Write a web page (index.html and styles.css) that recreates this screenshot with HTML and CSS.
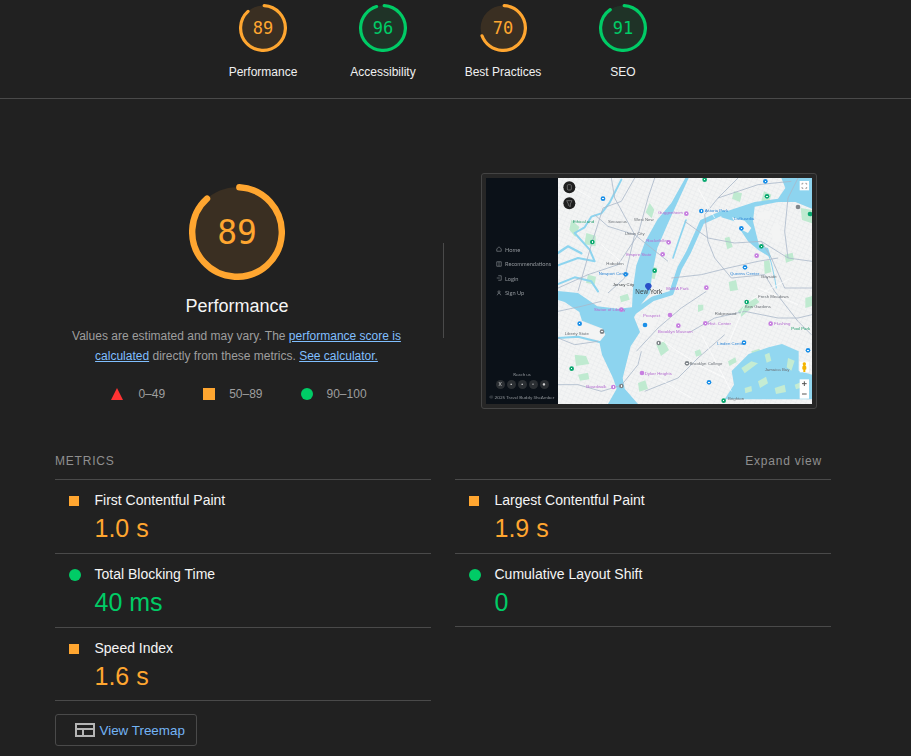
FILE: index.html
```html
<!DOCTYPE html>
<html lang="en">
<head>
    <meta charset="UTF-8">
    <title>Lighthouse Report</title>
    <link rel="stylesheet" href="styles.css">
</head>
<body>
    <header class="topbar">
        <div class="topbar-scores">
            <div class="score-item">
                <svg class="gauge-small" viewBox="0 0 48 48"><circle class="gauge-bg avg" cx="24" cy="24" r="22.4"/><circle class="gauge-arc avg" cx="24" cy="24" r="22.4" pathLength="100" stroke-dasharray="87.5 100" transform="rotate(-87 24 24)"/><text class="gauge-num avg-text" x="24" y="30">89</text></svg>
                <div class="score-label">Performance</div>
            </div>
            <div class="score-item">
                <svg class="gauge-small" viewBox="0 0 48 48"><circle class="gauge-bg good" cx="24" cy="24" r="22.4"/><circle class="gauge-arc good" cx="24" cy="24" r="22.4" pathLength="100" stroke-dasharray="94.5 100" transform="rotate(-87 24 24)"/><text class="gauge-num good-text" x="24" y="30">96</text></svg>
                <div class="score-label">Accessibility</div>
            </div>
            <div class="score-item">
                <svg class="gauge-small" viewBox="0 0 48 48"><circle class="gauge-bg avg" cx="24" cy="24" r="22.4"/><circle class="gauge-arc avg" cx="24" cy="24" r="22.4" pathLength="100" stroke-dasharray="68.5 100" transform="rotate(-87 24 24)"/><text class="gauge-num avg-text" x="24" y="30">70</text></svg>
                <div class="score-label">Best Practices</div>
            </div>
            <div class="score-item">
                <svg class="gauge-small" viewBox="0 0 48 48"><circle class="gauge-bg good" cx="24" cy="24" r="22.4"/><circle class="gauge-arc good" cx="24" cy="24" r="22.4" pathLength="100" stroke-dasharray="89.5 100" transform="rotate(-87 24 24)"/><text class="gauge-num good-text" x="24" y="30">91</text></svg>
                <div class="score-label">SEO</div>
            </div>
        </div>
    </header>

    <main class="report">
        <section class="hero">
            <div class="hero-score">
                <svg class="gauge-big" viewBox="0 0 96 96"><circle class="gauge-bg avg" cx="48" cy="48" r="44.8"/><circle class="gauge-arc-big avg" cx="48" cy="48" r="44.8" pathLength="100" stroke-dasharray="87.5 100" transform="rotate(-87 48 48)"/><text class="gauge-num-big avg-text" x="48" y="60">89</text></svg>
                <h2>Performance</h2>
                <p class="hero-note">Values are estimated and may vary. The <a href="#">performance score is</a> <a href="#">calculated</a> directly from these metrics. <a href="#">See calculator.</a></p>
                <div class="legend">
                    <div class="legend-item"><span class="icon-triangle"></span>0–49</div>
                    <div class="legend-item"><span class="icon-square"></span>50–89</div>
                    <div class="legend-item"><span class="icon-circle"></span>90–100</div>
                </div>
            </div>
            <div class="hero-divider"></div>
            <div class="shot">
                <aside class="shot-side">
                    <nav class="shot-nav">
                        <div class="shot-link"><svg viewBox="0 0 8 8"><path d="M1 4 4 1l3 3v3H1z"/></svg>Home</div>
                        <div class="shot-link"><svg viewBox="0 0 8 8"><path d="M1 1h6v6H1zM4 1v6"/></svg>Recommendations</div>
                        <div class="shot-link"><svg viewBox="0 0 8 8"><path d="M3 1h4v6H3M1 4h4"/></svg>Login</div>
                        <div class="shot-link"><svg viewBox="0 0 8 8"><circle cx="4" cy="2.5" r="1.4"/><path d="M1.5 7 3 4.5h2L6.500 7"/></svg>Sign Up</div>
                    </nav>
                    <div class="shot-foot">
                        <div class="shot-reach">Reach us</div>
                        <div class="shot-socials">
                            <span>X</span><span>▪</span><span>▪</span><span>▫</span><span>●</span>
                        </div>
                        <div class="shot-copy">© 2025 Travel Buddy SheAmber</div>
                    </div>
                </aside>
                <svg class="shot-map" viewBox="0 0 762 678">
                    <defs>
                        <pattern id="streets" width="14" height="12" patternUnits="userSpaceOnUse" patternTransform="rotate(24)">
                            <path d="M0 0H14M0 0V12" stroke="#d9dde1" stroke-width="1.4" fill="none"/>
                        </pattern>
                        <radialGradient id="pin-purple"><stop offset="22%" stop-color="#fff"/><stop offset="30%" stop-color="#c77fe0"/></radialGradient>
                        <radialGradient id="pin-blue"><stop offset="22%" stop-color="#fff"/><stop offset="30%" stop-color="#1a8fe8"/></radialGradient>
                        <radialGradient id="pin-green"><stop offset="22%" stop-color="#fff"/><stop offset="30%" stop-color="#0aa870"/></radialGradient>
                        <radialGradient id="pin-grey"><stop offset="22%" stop-color="#fff"/><stop offset="30%" stop-color="#80868b"/></radialGradient>
                    </defs>
                    <rect width="762" height="678" fill="#f3f4f4"/>
                    <rect width="762" height="678" fill="url(#streets)"/>

                    <!-- parks -->
                    <path fill="#bfead0" d="M275 75l14 20-8 26-18-18zM40 125l24 22-12 30-18-22zM85 165l28 8 0 32-34-6zM272 262l26 8-8 34-24-8zM90 290l24 6-4 24-26-6zM528 40l24 6-6 26-24-10zM618 40l22 10-8 26-22-8zM500 180l14-4 10 30-16 8zM618 250l16-4 6 36-20 6zM512 312l22-6 6 30-24 4zM680 230l24-6 4 22-24 8zM540 400l30-30 24-10 10 12-30 24-24 20zM420 380l16 0 0 16-16 6zM410 520l16-6 6 16-18 6zM580 520l24-8 6 14-24 14zM510 550l22-12 4 14-22 12zM185 355l24-8 6 18-26 8zM295 500l24-10 14 26-24 18zM50 530l34 4 10 24-40 6zM240 615l22-8 8 26-26 8zM60 590l30-6 4 20-28 4zM728 90l34 6 0 40-30-10zM742 360l20-6 0 30-20 6z"/>

                    <!-- water -->
                    <g fill="#8dd4ef">
                        <path d="M382 0 392 0 352 88 328 140 298 210 282 290 276 345 250 378 228 418 246 462 218 505 206 552 194 600 200 632 240 678 150 678 176 632 165 600 132 530 124 492 142 470 134 452 72 428 64 402 20 372 0 366 0 339 60 345 118 385 180 392 222 388 225 330 235 262 262 190 298 125 340 75z"/>
                        <path d="M490 105 590 72 660 62 682 30 670 0 762 0 762 92 712 72 660 72 590 86 585 130 604 205 630 210 640 240 600 215 570 190 530 130 490 118z"/>
                        <path d="M521 579 552 548 572 528 632 508 672 498 722 520 722 578 762 590 762 664 500 664 528 620z" fill="#92d7f0"/>
                    </g>
                    <g fill="none" stroke="#8dd4ef" stroke-linejoin="round" stroke-linecap="round">
                        <path d="M232 400 285 362 340 345 365 270 392 222 432 132 495 104" stroke-width="14"/>
                        <path d="M345 240 365 180 384 126" stroke-width="5"/>
                        <path d="M0 262 60 240 110 250 95 215 50 165 80 148 100 116 130 106 155 74 190 5" stroke-width="6"/>
                        <path d="M0 225 30 205 70 226" stroke-width="7"/>
                        <path d="M0 318 50 298 100 310 120 340" stroke-width="6"/>
                        <path d="M625 210 640 255 650 300 655 330" stroke-width="3"/>
                        <path d="M0 480 60 476 124 492" stroke-width="6"/>
                    </g>
                    <g fill="#f3f4f4">
                        <path d="M522 118 560 128 580 150 570 165 540 150zM640 150 660 130 672 190 645 195zM595 104 640 98 634 125 604 122z"/>
                        <path d="M258 418 278 402 296 432 270 472 252 458z"/>
                        <path d="M68 432 132 452 140 470 122 486 60 470z"/>
                    </g>
                    <path d="M550 570l30-20 20 6-40 30zM600 610l24-14 6 20-24 14zM650 630l30-10 4 22-30 6zM690 540l20 8-10 30-14-10zM620 530l14-6 6 24-14 6zM560 630l20-6 2 16-20 6zM710 620l20-8 4 16-20 6z" fill="#c5ecd2"/>

                    <!-- roads -->
                    <g fill="none" stroke="#a9b8c9" stroke-width="2.4">
                        <path d="M0 330 90 290 180 260 240 170 270 60 290 0"/>
                        <path d="M110 110 150 145 230 170 330 250"/>
                        <path d="M230 0 190 70 135 90 100 200 60 340"/>
                        <path d="M380 130 450 180 530 195 610 190 690 240 762 250"/>
                        <path d="M340 300 430 290 510 270 600 250 660 240"/>
                        <path d="M450 190 470 240 520 300 620 290 650 340 720 430 760 470"/>
                        <path d="M400 460 470 420 560 400 660 420 720 420 762 410"/>
                        <path d="M235 520 300 450 370 390 445 340"/>
                        <path d="M0 620 60 620 130 640 190 622 240 560 250 520"/>
                        <path d="M540 0 480 60 440 110 450 190"/>
                        <path d="M690 240 680 160 690 60 720 0"/>
                        <path d="M0 480 50 500 120 490"/>
                        <path d="M160 0 170 60 230 170 200 300 150 345"/>
                        <path d="M480 60 600 20 700 10"/>
                        <path d="M610 190 640 240 680 330 762 330"/>
                        <path d="M260 640 360 600 420 540 500 470"/>
                        <path d="M0 400 70 385 130 370"/>
                    </g>
                    <g fill="none" stroke="#fff" stroke-width="2">
                        <path d="M300 480 420 560 500 600M430 470 520 640M560 380 510 500M700 300 620 340 560 380M30 20 100 60M130 200 200 260M420 30 470 120M600 330 720 380M300 600 400 660"/>
                    </g>

                    <!-- pins -->
                    <g fill="url(#pin-purple)">
                        <circle cx="385" cy="107" r="7"/><circle cx="332" cy="193" r="7"/><circle cx="314" cy="229" r="7"/><circle cx="445" cy="329" r="7"/><circle cx="190" cy="395" r="7"/><circle cx="336" cy="411" r="7"/><circle cx="361" cy="443" r="7"/><circle cx="442" cy="436" r="7"/><circle cx="638" cy="437" r="7"/><circle cx="596" cy="233" r="7"/><circle cx="252" cy="585" r="7"/><circle cx="166" cy="627" r="7"/>
                    </g>
                    <g fill="url(#pin-blue)">
                        <circle cx="135" cy="62" r="7"/><circle cx="430" cy="99" r="7"/><circle cx="550" cy="151" r="7"/><circle cx="561" cy="268" r="7"/><circle cx="622" cy="10" r="7"/><circle cx="203" cy="289" r="7"/><circle cx="65" cy="437" r="7"/><circle cx="261" cy="441" r="7"/><circle cx="558" cy="494" r="7"/><circle cx="453" cy="613" r="7"/><circle cx="750" cy="517" r="7"/>
                    </g>
                    <g fill="url(#pin-green)">
                        <circle cx="440" cy="5" r="7"/><circle cx="627" cy="55" r="7"/><circle cx="103" cy="192" r="7"/><circle cx="290" cy="278" r="7"/><circle cx="610" cy="205" r="7"/><circle cx="566" cy="372" r="7"/><circle cx="41" cy="572" r="7"/><circle cx="497" cy="668" r="7"/><circle cx="756" cy="108" r="7"/>
                    </g>
                    <g fill="url(#pin-grey)">
                        <circle cx="132" cy="461" r="7"/><circle cx="302" cy="495" r="7"/><circle cx="190" cy="624" r="7"/><circle cx="387" cy="556" r="7"/><circle cx="720" cy="87" r="7"/>
                    </g>
                    <path d="M271 315c-7 0-10 5-10 9 0 6 10 14 10 14s10-8 10-14c0-4-3-9-10-9z" fill="#2a50c8"/>

                    <!-- labels -->
                    <g class="map-label">
                        <text x="44" y="135" class="map-label-green">Ethical and</text><text x="150" y="134">Secaucus</text><text x="200" y="170">Union City</text><text x="228" y="128">West New</text><text x="145" y="262">Hoboken</text>
                        <text x="164" y="325" class="map-label-dark">Jersey City</text>
                        <text x="300" y="108" class="map-label-purple">Guggenheim</text><text x="265" y="192" class="map-label-purple">Rockefeller</text><text x="205" y="233" class="map-label-purple">Empire State</text>
                        <text x="122" y="292" class="map-label-blue">Newport Centre</text><text x="440" y="103" class="map-label-blue">Astoria Park</text><text x="528" y="126" class="map-label-blue">LaGuardia</text><text x="516" y="290" class="map-label-blue">Queens Center</text><text x="108" y="399" class="map-label-purple">Statue of Liberty</text>
                        <text x="325" y="335" class="map-label-purple">MoMA Park</text><text x="255" y="416" class="map-label-purple">Prospect</text><text x="648" y="442" class="map-label-purple">Flushing</text><text x="450" y="440" class="map-label-purple">Hist. Center</text><text x="300" y="466" class="map-label-purple">Brooklyn Museum</text>
                        <text x="478" y="500" class="map-label-blue">Linden Center</text><text x="260" y="590" class="map-label-purple">Dyker Heights</text><text x="85" y="631" class="map-label-purple">Boardwalk</text><text x="395" y="560">Brooklyn College</text><text x="620" y="580">Jamaica Bay</text><text x="700" y="455" class="map-label-green">Pool Park</text><text x="20" y="470">Liberty State</text><text x="470" y="410">Ridgewood</text><text x="560" y="390">Kew Gardens</text><text x="610" y="300">Bayside</text><text x="600" y="360">Fresh Meadows</text><text x="510" y="665">Brighton</text>
                    </g>
                    <text x="232" y="348" class="map-label-city">New York</text>

                    <!-- map controls -->
                    <circle cx="34" cy="28" r="18" fill="#1f1f1f"/>
                    <rect x="28" y="20" width="12" height="16" rx="3" fill="none" stroke="#888" stroke-width="2"/>
                    <circle cx="34" cy="76" r="18" fill="#1f1f1f"/>
                    <path d="M26 68H42L37 78V86L31 82V78z" fill="none" stroke="#888" stroke-width="2"/>
                    <rect x="725" y="9" width="28" height="28" fill="#fff"/>
                    <path d="M732 20V16H736M742 16H746V20M746 27V31H742M736 31H732V27" fill="none" stroke="#777" stroke-width="2"/>
                    <rect x="725" y="604" width="28" height="58" fill="#fff"/>
                    <path d="M732 617H746M739 610V624M732 648H746" stroke="#555" stroke-width="3"/>
                    <rect x="725" y="551" width="28" height="32" fill="#fff"/>
                    <path d="M739 553c-4 0-5 3-5 5s1 3 2 4l-3 4v8l3 1v7h6v-7l3-1v-8l-3-4c1-1 2-2 2-4s-1-5-5-5z" fill="#f4b400"/>
                </svg>
            </div>
        </section>

        <section class="metrics">
            <div class="metrics-head">
                <span class="metrics-title">Metrics</span>
                <span class="metrics-toggle">Expand view</span>
            </div>
            <div class="metrics-grid">
                <div class="metric">
                    <span class="icon-square"></span>
                    <div><div class="metric-name">First Contentful Paint</div><div class="metric-value avg-text">1.0 s</div></div>
                </div>
                <div class="metric">
                    <span class="icon-square"></span>
                    <div><div class="metric-name">Largest Contentful Paint</div><div class="metric-value avg-text">1.9 s</div></div>
                </div>
                <div class="metric">
                    <span class="icon-circle"></span>
                    <div><div class="metric-name">Total Blocking Time</div><div class="metric-value good-text">40 ms</div></div>
                </div>
                <div class="metric metric-end">
                    <span class="icon-circle"></span>
                    <div><div class="metric-name">Cumulative Layout Shift</div><div class="metric-value good-text">0</div></div>
                </div>
                <div class="metric metric-end">
                    <span class="icon-square"></span>
                    <div><div class="metric-name">Speed Index</div><div class="metric-value avg-text">1.6 s</div></div>
                </div>
            </div>
            <button class="treemap-btn">
                <svg viewBox="0 0 20 14"><path d="M1 1H19V13H1zM1 6H19M8 6V13" fill="none" stroke="#b5b5b5" stroke-width="2"/></svg>
                View Treemap
            </button>
        </section>
    </main>
</body>
</html>
```

FILE: styles.css
```css
body, h2, p {
    margin: 0;
    padding: 0;
}

body {
    background-color: #212121;
    color: #fff;
    font-family: "Liberation Sans", Arial, sans-serif;
    height: 756px;
    overflow: hidden;
}

.topbar {
    border-bottom: 1px solid #4a4a4a;
    height: 98px;
}

.topbar-scores {
    display: flex;
    width: 480px;
    margin-left: 203px;
    padding-top: 4px;
}

.score-item {
    width: 120px;
    text-align: center;
}

.gauge-small {
    display: block;
    width: 48px;
    height: 48px;
    margin: 0 auto;
}

.score-label {
    font-size: 12px;
    line-height: 20px;
    margin-top: 10px;
    color: #f0f0f0;
}

.gauge-bg.avg { fill: #3a2f22; }
.gauge-bg.good { fill: #1f3327; }

.gauge-arc, .gauge-arc-big {
    fill: none;
    stroke-linecap: round;
    stroke-width: 3.2;
}

.gauge-arc-big { stroke-width: 6.4; }

.gauge-arc.avg, .gauge-arc-big.avg { stroke: #ffa630; }
.gauge-arc.good { stroke: #00cc66; }

.gauge-num, .gauge-num-big {
    font-family: "DejaVu Sans Mono", monospace;
    text-anchor: middle;
    font-size: 17px;
}

.gauge-num-big { font-size: 33px; }

.avg-text { color: #ffa630; fill: #ffa630; }
.good-text { color: #00cc66; fill: #00cc66; }

.report {
    padding: 74px 80px 0 55px;
}

.hero {
    display: flex;
    align-items: flex-start;
    height: 275px;
}

.hero-score {
    width: 364px;
    padding-top: 11px;
    text-align: center;
}

.gauge-big {
    display: block;
    width: 96px;
    height: 96px;
    margin: 0 auto;
}

.hero-score h2 {
    font-size: 18px;
    font-weight: normal;
    line-height: 24px;
    margin-top: 14px;
    color: #f5f5f5;
}

.hero-note {
    font-size: 12px;
    line-height: 20px;
    color: #9e9e9e;
    margin-top: 8px;
    padding: 0 10.5px 0 9.5px;
}

.hero-note a {
    color: #80bfff;
}

.legend {
    display: flex;
    justify-content: center;
    gap: 38px;
    margin-top: 18px;
    padding-left: 4px;
    font-size: 12px;
    line-height: 20px;
    color: #9e9e9e;
}

.legend-item {
    display: flex;
    align-items: center;
}

.legend .icon-triangle {
    margin-right: 15px;
}

.legend .icon-square, .legend .icon-circle {
    width: 12px;
    height: 12px;
    margin: 0 14px 0 0;
}

.icon-triangle {
    width: 0;
    height: 0;
    border-left: 6px solid transparent;
    border-right: 6px solid transparent;
    border-bottom: 12px solid #ff3333;
}

.icon-square {
    flex: none;
    width: 10px;
    height: 10px;
    background-color: #ffa630;
}

.icon-circle {
    flex: none;
    width: 12px;
    height: 12px;
    border-radius: 50%;
    background-color: #00cc66;
}

.hero-divider {
    width: 1px;
    height: 95px;
    background-color: #4a4a4a;
    margin: 70px 37px 0 24px;
}

.shot {
    display: flex;
    width: 326px;
    height: 226px;
    padding: 4px;
    border: 1px solid #444;
    border-radius: 3px;
    background-color: #262626;
}

.shot-side {
    width: 72px;
    flex: none;
    display: flex;
    flex-direction: column;
    background-color: #0b1118;
    color: #8f9499;
    font-family: "Lato", sans-serif;
    font-size: 5.7px;
    filter: blur(0.3px);
}

.shot-nav {
    padding: 64px 0 0 10px;
}

.shot-link {
    display: flex;
    align-items: center;
    gap: 3px;
    height: 14.5px;
    white-space: nowrap;
}

.shot-link svg {
    width: 6px;
    height: 6px;
    fill: none;
    stroke: #8f9499;
    stroke-width: 0.8;
}

.shot-foot {
    margin-top: auto;
    text-align: center;
    padding-bottom: 3px;
}

.shot-reach {
    font-size: 4.5px;
    line-height: 8px;
}

.shot-socials {
    display: flex;
    justify-content: center;
    gap: 2px;
    margin: 1px 0 5px;
}

.shot-socials span {
    width: 9px;
    height: 9px;
    border-radius: 50%;
    background-color: #2b2f33;
    color: #d0d0d0;
    font-size: 5px;
    line-height: 9px;
}

.shot-copy {
    font-size: 4.6px;
    line-height: 7px;
    white-space: nowrap;
}

.shot-map {
    display: block;
    width: 254px;
    height: 226px;
    filter: blur(0.35px);
}

.map-label text, .map-label-city {
    font-family: "Liberation Sans", sans-serif;
}

.map-label text {
    font-size: 13px;
    fill: #6b7076;
}

.map-label .map-label-dark { fill: #3c4043; }
.map-label .map-label-purple { fill: #b56ad0; }
.map-label .map-label-blue { fill: #2f86d6; }
.map-label .map-label-green { fill: #1f9d6a; }

.map-label-city {
    font-size: 19px;
    fill: #3c4043;
}

.metrics {
    width: 776px;
}

.metrics-head {
    display: flex;
    justify-content: space-between;
    align-items: center;
    height: 26px;
    padding: 0 9px 5px 0;
    font-size: 12px;
    letter-spacing: 0.8px;
    color: #8f8f8f;
}

.metrics-title {
    text-transform: uppercase;
}

.metrics-grid {
    display: grid;
    grid-template-columns: 376px 376px;
    column-gap: 24px;
}

.metric {
    display: flex;
    align-items: flex-start;
    height: 73px;
    padding: 0 14px;
    border-top: 1px solid #4a4a4a;
    width: 348px;
}

.metric-end {
    height: 72px;
    border-bottom: 1px solid #4a4a4a;
}

.metric .icon-square {
    margin: 16px 15.500px 0 0;
}

.metric .icon-circle {
    margin: 15px 13.500px 0 0;
}

.metric-name {
    font-size: 14px;
    line-height: 20px;
    padding-top: 10px;
    color: #f5f5f5;
}

.metric-value {
    font-size: 25px;
    line-height: 36px;
}

.treemap-btn {
    display: flex;
    align-items: center;
    gap: 4.5px;
    width: 142px;
    height: 32px;
    margin-top: 13px;
    padding: 0 0 0 19px;
    background: none;
    border: 1px solid #4a4a4a;
    border-radius: 3px;
    color: #74b4f5;
    font-family: "Liberation Sans", Arial, sans-serif;
    font-size: 13.4px;
    box-sizing: border-box;
}

.treemap-btn svg {
    width: 20px;
    height: 14px;
}
```
